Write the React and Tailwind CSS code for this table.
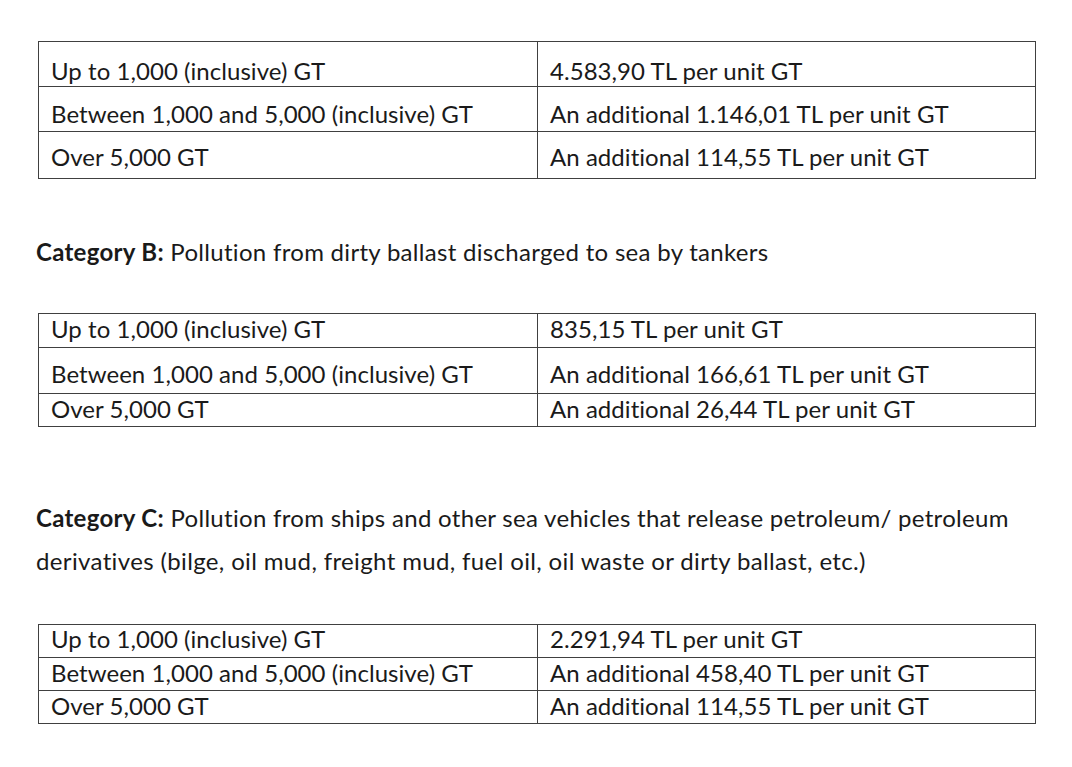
import React from 'react';

const tableOne = [
  { left: 'Up to 1,000 (inclusive) GT', right: '4.583,90 TL per unit GT', h: 'h-[44px]', pt: 'pt-[17px]' },
  { left: 'Between 1,000 and 5,000 (inclusive) GT', right: 'An additional 1.146,01 TL per unit GT', h: 'h-[45px]', pt: 'pt-[15px]' },
  { left: 'Over 5,000 GT', right: 'An additional 114,55 TL per unit GT', h: 'h-[47px]', pt: 'pt-[13px]' },
];

const tableTwo = [
  { left: 'Up to 1,000 (inclusive) GT', right: '835,15 TL per unit GT', h: 'h-[33px]', pt: 'pt-[3px]' },
  { left: 'Between 1,000 and 5,000 (inclusive) GT', right: 'An additional 166,61 TL per unit GT', h: 'h-[46px]', pt: 'pt-[14px]' },
  { left: 'Over 5,000 GT', right: 'An additional 26,44 TL per unit GT', h: 'h-[33px]', pt: 'pt-[3px]' },
];

const tableThree = [
  { left: 'Up to 1,000 (inclusive) GT', right: '2.291,94 TL per unit GT', h: 'h-[32px]', pt: 'pt-[2px]' },
  { left: 'Between 1,000 and 5,000 (inclusive) GT', right: 'An additional 458,40 TL per unit GT', h: 'h-[33px]', pt: 'pt-[3px]' },
  { left: 'Over 5,000 GT', right: 'An additional 114,55 TL per unit GT', h: 'h-[33px]', pt: 'pt-[3px]' },
];

// one fee table, rows drawn as bordered grid lines
const FeeTable = ({ rows, className = '' }) => (
  <div className={`ml-[2px] w-[998px] border border-[#404040] leading-[24px] tracking-[0.05px] ${className}`}>
    {rows.map((row, i) => (
      <div
        key={i}
        className={`grid grid-cols-[499px_1fr] ${row.h} ${i > 0 ? 'border-t border-[#404040]' : ''}`}
      >
        <div className={`border-r border-[#404040] pl-[12px] whitespace-nowrap ${row.pt}`}>{row.left}</div>
        <div className={`pl-[12px] whitespace-nowrap ${row.pt}`}>{row.right}</div>
      </div>
    ))}
  </div>
);

const App = () => {
  return (
    <div className="min-h-screen w-full bg-white pl-[36px] pt-[41px] font-['Lato',sans-serif] text-[24px] leading-[29px] text-[#1a1a1a]">
      <FeeTable rows={tableOne} />

      <p className="mt-[58px] tracking-[0.3px]">
        <span className="font-bold">Category B:</span> Pollution from dirty ballast discharged to sea by tankers
      </p>

      <FeeTable rows={tableTwo} className="mt-[47px]" />

      <p className="mt-[69px] w-[1000px] leading-[43px] tracking-[0.3px]">
        <span className="font-bold">Category C:</span> Pollution from ships and other sea vehicles that release petroleum/ petroleum
        <br />
        <span className="tracking-[0.36px]">derivatives (bilge, oil mud, freight mud, fuel oil, oil waste or dirty ballast, etc.)</span>
      </p>

      <FeeTable rows={tableThree} className="mt-[42px]" />
    </div>
  );
};

export default App;
